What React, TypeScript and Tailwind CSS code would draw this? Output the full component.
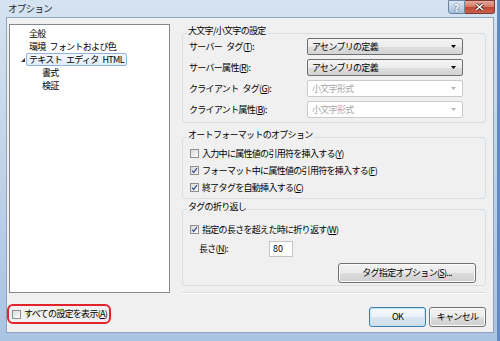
import { ReactNode } from "react";
import { clsx } from "clsx";

const font = "font-['Noto_Sans_CJK_JP','Noto_Sans',sans-serif]";

// underlined access key, e.g. (T)
const Key = ({ k }: { k: string }) => (
  <>
    (<span className="underline">{k}</span>)
  </>
);

// the dialog font has a wider space than Noto's
const Sp = () => <span className="inline-block w-[4px]" />;

const Check = ({ checked }: { checked?: boolean }) => (
  <span className="flex h-[9px] w-[9px] shrink-0 items-center justify-center border border-[#8e8f8f] bg-linear-to-br from-[#d9d9d9] to-[#fdfdfd]">
    {checked && (
      <svg viewBox="0 0 8 8" className="h-[7px] w-[7px]">
        <path d="M1.2 4.2 L3.1 6.2 L6.8 1.2" fill="none" stroke="#3a4d88" strokeWidth="1.4" />
      </svg>
    )}
  </span>
);

const Combo = ({ text, disabled }: { text: string; disabled?: boolean }) => (
  <div
    className={clsx(
      "flex h-[17px] w-[156px] items-center justify-between rounded-[2px] border pl-[4px] pr-[6px]",
      disabled
        ? "border-[#cacaca] bg-white text-[#a5a5a5]"
        : "border-[#707070] bg-[linear-gradient(180deg,#f4f4f4_0%,#ececec_50%,#dedede_51%,#d4d4d4_100%)]"
    )}
  >
    <span>{text}</span>
    <svg width="5" height="3" viewBox="0 0 5 3">
      <path d="M0 0h5L2.5 3z" fill={disabled ? "#b5b5b5" : "#000"} />
    </svg>
  </div>
);

const Group = ({ title, className, children }: { title: string; className?: string; children: ReactNode }) => (
  <div className={className}>
    <div className="relative z-10 ml-[5px] w-fit bg-[#f0f0f0] px-[1px] leading-[12px]">{title}</div>
    <div className="-mt-[4px] rounded-[3px] border border-[#d5dfe5]">{children}</div>
  </div>
);

const Btn = ({ children, def, className }: { children: ReactNode; def?: boolean; className?: string }) => (
  <div
    className={clsx(
      "flex h-[20px] w-[57px] items-center justify-center rounded-[3px] border",
      def
        ? "border-[#3c7fb1] bg-[linear-gradient(180deg,#f6fafd_0%,#e9f1f8_50%,#d9e6f1_51%,#cfdeeb_100%)] shadow-[inset_0_0_0_1px_#c5e6f8]"
        : "border-[#707070] bg-[linear-gradient(180deg,#f2f2f2_0%,#ebebeb_50%,#dddddd_51%,#cfcfcf_100%)] shadow-[inset_0_0_0_1px_#fcfcfc]",
      className
    )}
  >
    {children}
  </div>
);

const TreeItem = ({ children, indent = 0, selected, expander }: { children: ReactNode; indent?: number; selected?: boolean; expander?: boolean }) => (
  <div className="flex h-[13px] items-center" style={{ paddingLeft: 10 + indent }}>
    <span className="flex w-[5px] justify-center">
      {expander && (
        <svg width="4" height="4" viewBox="0 0 4 4">
          <path d="M4 0V4H0z" fill="#333" />
        </svg>
      )}
    </span>
    <span
      className={clsx(
        "ml-[1px] rounded-[2px] border px-[2px] leading-[11px]",
        selected ? "border-[#8db2e3] bg-linear-to-b from-[#f3f8fd] to-[#e0edfa]" : "border-transparent"
      )}
    >
      {children}
    </span>
  </div>
);

export default function App() {
  return (
    <div
      className={clsx(
        "flex h-[341px] w-[500px] flex-col overflow-hidden border-r-[3px] border-[#5f8ac4] bg-[linear-gradient(180deg,#d5e3f1_0%,#c3d6ea_40%,#a9c3e2_100%)] text-[9px] tracking-[-0.7px] text-black",
        font
      )}
    >
      {/* title bar */}
      <div className="flex h-[17px] items-start justify-between">
        <span className="pl-[8px] pt-[2px] text-[9.5px] leading-[12px] text-[#1e1e1e]">オプション</span>
        <div className="mr-[2px] flex">
          <div className="flex h-[14px] w-[17px] items-center justify-center rounded-bl-[3px] border border-[#6d84a3] bg-linear-to-b from-[#dbe7f4] to-[#a6bfdc] text-[10px] font-bold tracking-normal text-white [text-shadow:0_0_2px_#34466a]">
            ?
          </div>
          <div className="flex h-[14px] w-[30px] items-center justify-center rounded-br-[3px] border border-l-0 border-[#7b3a32] bg-[linear-gradient(180deg,#e7a89c_0%,#d47767_50%,#c24734_51%,#c9604c_100%)]">
            <svg width="9" height="8" viewBox="0 0 9 8">
              <path d="M1 1L8 7M8 1L1 7" stroke="#41221d" strokeWidth="3" />
              <path d="M1 1L8 7M8 1L1 7" stroke="#fff" strokeWidth="1.6" />
            </svg>
          </div>
        </div>
      </div>

      {/* client area */}
      <div className="ml-[6px] mr-[3px] flex h-[316px] flex-col border border-[#8fa3bb] bg-[#f0f0f0]">
        <div className="ml-[2px] mt-[6px] flex">
          {/* tree */}
          <div className="h-[269px] w-[161px] border border-[#828790] bg-white pt-[2px]">
            <TreeItem>全般</TreeItem>
            <TreeItem>
              環境<Sp />フォントおよび色
            </TreeItem>
            <TreeItem expander selected>
              テキスト<Sp />エディタ<Sp />HTML
            </TreeItem>
            <TreeItem indent={13}>書式</TreeItem>
            <TreeItem indent={13}>検証</TreeItem>
          </div>

          {/* settings */}
          <div className="ml-[12px] mt-[1px] w-[304px]">
            <Group title="大文字/小文字の設定">
              <div className="flex flex-col gap-[4px] pb-[4px] pl-[6px] pt-[4px]">
                <div className="flex items-center">
                  <span className="w-[118px]">
                    サーバー<Sp />タグ<Key k="T" />:
                  </span>
                  <Combo text="アセンブリの定義" />
                </div>
                <div className="flex items-center">
                  <span className="w-[118px]">
                    サーバー属性<Key k="R" />:
                  </span>
                  <Combo text="アセンブリの定義" />
                </div>
                <div className="flex items-center">
                  <span className="w-[118px]">
                    クライアント<Sp />タグ<Key k="G" />:
                  </span>
                  <Combo text="小文字形式" disabled />
                </div>
                <div className="flex items-center">
                  <span className="w-[118px]">
                    クライアント属性<Key k="B" />:
                  </span>
                  <Combo text="小文字形式" disabled />
                </div>
              </div>
            </Group>

            <Group title="オートフォーマットのオプション" className="mt-[6px]">
              <div className="flex flex-col gap-[4px] pb-[4px] pl-[7px] pt-[9px]">
                <div className="flex h-[13px] items-center gap-[3px]">
                  <Check />
                  <span>
                    入力中に属性値の引用符を挿入する<Key k="Y" />
                  </span>
                </div>
                <div className="flex h-[13px] items-center gap-[3px]">
                  <Check checked />
                  <span>
                    フォーマット中に属性値の引用符を挿入する<Key k="F" />
                  </span>
                </div>
                <div className="flex h-[13px] items-center gap-[3px]">
                  <Check checked />
                  <span>
                    終了タグを自動挿入する<Key k="C" />
                  </span>
                </div>
              </div>
            </Group>

            <Group title="タグの折り返し" className="mt-[2px]">
              <div className="flex flex-col pb-[2px] pl-[7px] pt-[13px]">
                <div className="flex h-[13px] items-center gap-[3px]">
                  <Check checked />
                  <span>
                    指定の長さを超えた時に折り返す<Key k="W" />
                  </span>
                </div>
                <div className="mt-[5px] flex h-[16px] items-center">
                  <span className="ml-[9px] w-[70px]">
                    長さ<Key k="N" />:
                  </span>
                  <div className="flex h-[16px] w-[24px] items-center border border-[#c5c5c5] bg-white pl-[3px] tracking-normal">
                    80
                  </div>
                </div>
                <div className="mt-[6px] flex justify-end pr-[9px]">
                  <Btn className="h-[19px] w-[138px]">
                    タグ指定オプション<Key k="S" />...
                  </Btn>
                </div>
              </div>
            </Group>

            <div className="mt-[6px] h-[2px] border-t border-[#d5dfe5] bg-white" />
          </div>
        </div>

        {/* footer */}
        <div className="mt-[10px] flex items-start">
          <div className="flex h-[20px] w-[104px] items-center gap-[3px] rounded-[6px] border-2 border-[#e3232c] pl-[3px]">
            <Check />
            <span>
              すべての設定を表示<Key k="A" />
            </span>
          </div>
          <div className="ml-auto mr-[7px] mt-[3px] flex gap-[3px]">
            <Btn def>OK</Btn>
            <Btn>キャンセル</Btn>
          </div>
        </div>
      </div>
    </div>
  );
}
